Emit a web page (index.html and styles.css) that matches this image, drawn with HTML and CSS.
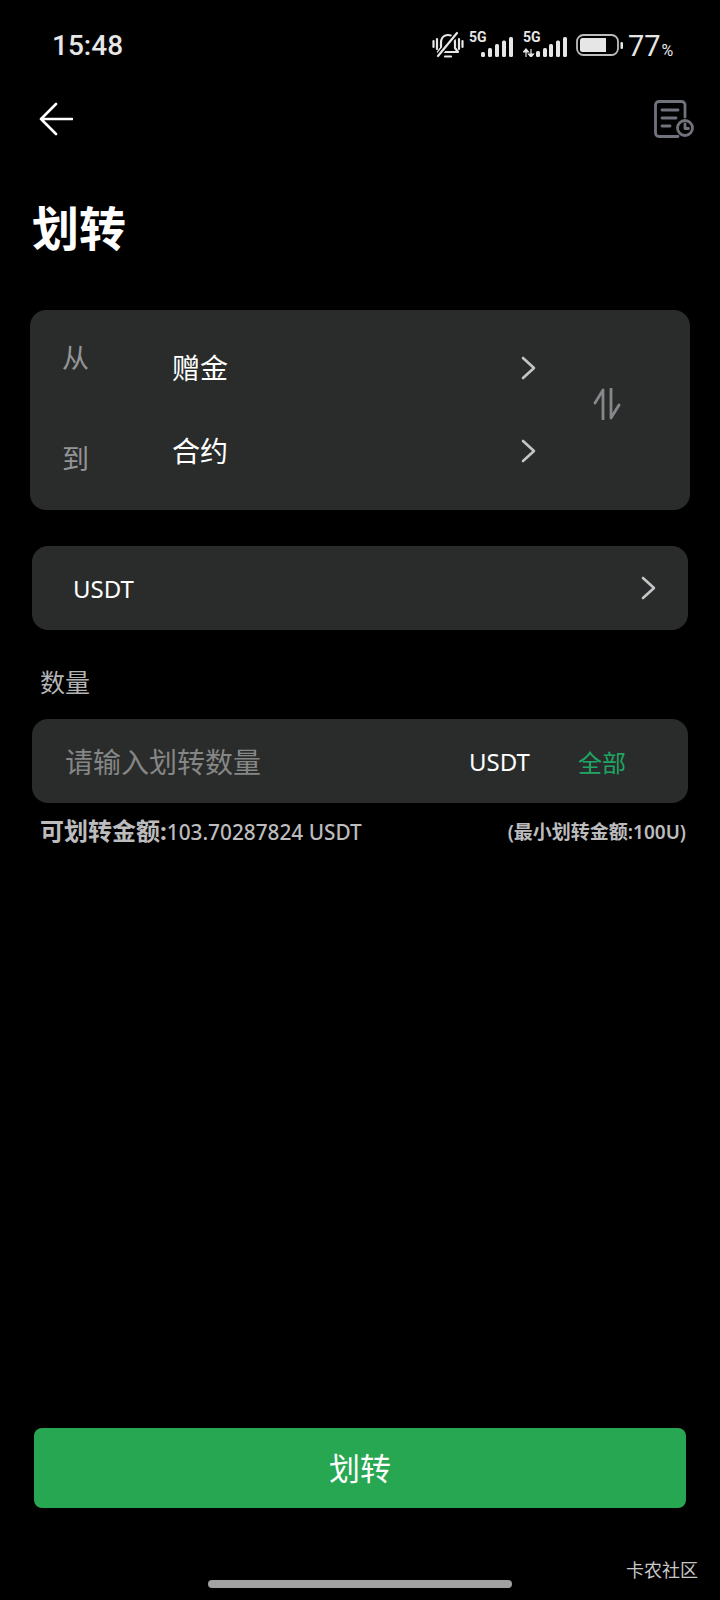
FILE: index.html
```html
<!DOCTYPE html>
<html lang="zh-CN">
  <head>
    <meta charset="UTF-8" />
    <meta name="viewport" content="width=device-width, initial-scale=1.0" />
    <title>划转</title>
    <link rel="stylesheet" href="styles.css">
  </head>
  <body>
    <div class="status">
      <span class="time">15:48</span>
      <div class="status-icons">
        <svg class="bell" width="32" height="28" viewBox="0 0 32 28" fill="none" stroke="#e6e6e6" stroke-width="2.2" stroke-linecap="round" stroke-linejoin="round">
          <path d="M1.5 10v6M5 8v10M30.500 10v6M27 8v10"/>
          <path d="M16 4c-5 0-7 4-7 8v5l-3 4h20l-3-4v-5c0-4-2-8-7-8z"/>
          <path d="M13 25.500h6"/>
          <path d="M6 25L25 2" stroke="#000" stroke-width="5"/>
          <path d="M6 25L25 2"/>
        </svg>
        <div class="net net-first">
          <span class="net-label">5G</span>
          <svg width="32" height="20" viewBox="0 0 32 20" fill="#e6e6e6">
            <rect x="0" y="15" width="4" height="5" rx="1.500"/>
            <rect x="7" y="11" width="4" height="9" rx="1.500"/>
            <rect x="14" y="7" width="4" height="13" rx="1.500"/>
            <rect x="21" y="3.500" width="4" height="16.500" rx="1.500"/>
            <rect x="28" y="0" width="4" height="20" rx="1.500"/>
          </svg>
        </div>
        <div class="net">
          <span class="net-label">5G</span>
          <svg width="44" height="20" viewBox="0 0 44 20" fill="#e6e6e6">
            <path d="M3 12v8M0.500 15L3 12l2.500 3zM8 12v8M5.500 17L8 20l2.500-3z" stroke="#e6e6e6" stroke-width="1.200"/>
            <rect x="13" y="14" width="4" height="6" rx="1.500"/>
            <rect x="20" y="11" width="4" height="9" rx="1.500"/>
            <rect x="26" y="7" width="4" height="13" rx="1.500"/>
            <rect x="33" y="3.500" width="4" height="16.500" rx="1.500"/>
            <rect x="40" y="0" width="4" height="20" rx="1.500"/>
          </svg>
        </div>
        <svg class="battery" width="47" height="22" viewBox="0 0 47 22" fill="none">
          <rect x="1" y="1" width="41" height="20" rx="6.500" stroke="#bdbdbd" stroke-width="1.800"/>
          <path d="M6.500 4H30v14H6.500A2.500 2.500 0 0 1 4 15.500v-9A2.500 2.500 0 0 1 6.500 4z" fill="#e6e6e6"/>
          <rect x="44.500" y="8" width="2.500" height="7" rx="1.200" fill="#e6e6e6"/>
        </svg>
        <span class="percent">77<small>%</small></span>
      </div>
    </div>

    <div class="nav">
      <svg width="34" height="34" viewBox="0 0 34 34" fill="none" stroke="#fff" stroke-width="2.600" stroke-linecap="round" stroke-linejoin="round">
        <path d="M33 17H2M17 2L2 17l15 15"/>
      </svg>
      <svg width="40" height="38" viewBox="0 0 40 38" fill="none" stroke="#70727c" stroke-width="2.800" stroke-linecap="round" stroke-linejoin="round">
        <path d="M31 17V5a3.500 3.500 0 0 0-3.500-3.500H5A3.500 3.500 0 0 0 1.500 5v28A3.500 3.500 0 0 0 5 36.500h19"/>
        <path d="M8 10h16M8 18h14M8 26h8"/>
        <circle cx="31" cy="28" r="7.500"/>
        <path d="M31 24v4.500h3.500"/>
      </svg>
    </div>

    <div class="main">
      <h1>划转</h1>

      <div class="card transfer">
        <div class="labels">
          <span>从</span>
          <span>到</span>
        </div>
        <div class="values">
          <div class="value-row">
            <span>赠金</span>
            <svg class="chevron" width="16" height="24" viewBox="0 0 16 24"><path d="M3 2l11 10L3 22"/></svg>
          </div>
          <div class="value-row">
            <span>合约</span>
            <svg class="chevron" width="16" height="24" viewBox="0 0 16 24"><path d="M3 2l11 10L3 22"/></svg>
          </div>
        </div>
        <svg class="swap" width="28" height="32" viewBox="0 0 28 32" fill="none" stroke="#85878a" stroke-width="2.800" stroke-linecap="round" stroke-linejoin="round">
          <path d="M10 31V2L2 15M18 1v29l8-13"/>
        </svg>
      </div>

      <div class="card row coin">
        <span>USDT</span>
        <svg class="chevron" width="16" height="24" viewBox="0 0 16 24"><path d="M3 2l11 10L3 22"/></svg>
      </div>

      <div class="field-label">数量</div>

      <div class="card row amount">
        <span class="placeholder">请输入划转数量</span>
        <span class="unit">USDT</span>
        <span class="all">全部</span>
      </div>

      <div class="limits">
        <span class="avail"><b>可划转金额:</b>103.70287824 USDT</span>
        <span class="min">(最小划转金额:100U)</span>
      </div>

      <div class="submit">划转</div>
    </div>

    <div class="home-bar"></div>
    <div class="watermark">卡农社区</div>
  </body>
</html>
```

FILE: styles.css
```css
*{
    margin: 0;
    padding: 0;
    box-sizing: border-box;
}
body{
    position: relative;
    display: flex;
    flex-direction: column;
    height: 1600px;
    background: #000;
    color: #fff;
    font-family: "Noto Sans", "Noto Sans CJK SC", sans-serif;
    overflow: hidden;
}
.status{
    display: flex;
    justify-content: space-between;
    align-items: center;
    height: 90px;
    padding: 0 48px 0 52px;
    color: #e6e6e6;
    font-family: Roboto, sans-serif;
}
.time{
    font-size: 28px;
    font-weight: 500;
}
.status-icons{
    display: flex;
    align-items: center;
}
.bell{
    margin-right: 5px;
}
.net{
    position: relative;
    display: flex;
    align-items: flex-end;
    justify-content: flex-end;
    height: 24px;
    width: 44px;
    margin-left: 10px;
}
.net-first{
    margin-left: 0;
}
.net-label{
    position: absolute;
    left: 0;
    top: -3px;
    font-size: 14px;
    line-height: 14px;
    font-weight: 700;
}
.battery{
    margin-left: 9px;
}
.percent{
    width: 49px;
    padding: 6px 0 0 5px;
    font-size: 29px;
    line-height: 34px;
    white-space: nowrap;
}
.percent small{
    font-size: 16px;
    margin-left: 1px;
}
.nav{
    display: flex;
    justify-content: space-between;
    align-items: center;
    height: 58px;
    padding: 0 26px 0 39px;
}
.main{
    flex: 1;
    display: flex;
    flex-direction: column;
    padding: 0 30px;
}
h1{
    height: 60px;
    margin: 50px 0 52px 2px;
    font-size: 47px;
    line-height: 60px;
    font-weight: 700;
}
.card{
    background: #2a2c2b;
    border-radius: 16px;
}
.transfer{
    display: flex;
    align-items: flex-start;
    height: 200px;
    padding-left: 32px;
}
.labels{
    display: flex;
    flex-direction: column;
    gap: 71px;
    width: 110px;
    padding-top: 33px;
    font-size: 27px;
    line-height: 30px;
    color: #949596;
}
.values{
    display: flex;
    flex-direction: column;
    gap: 51px;
    width: 364px;
    padding-top: 42px;
    font-size: 28px;
    line-height: 32px;
}
.value-row{
    display: flex;
    justify-content: space-between;
    align-items: center;
}
.chevron{
    fill: none;
    stroke: #c4c5c9;
    stroke-width: 2.600;
    stroke-linecap: round;
    stroke-linejoin: round;
}
.swap{
    margin: 78px 0 0 57px;
}
.row{
    display: flex;
    align-items: center;
    height: 84px;
    margin: 0 2px;
}
.coin{
    justify-content: space-between;
    margin-top: 36px;
    padding: 0 32px 0 41px;
    font-size: 24px;
}
.field-label{
    margin: 35px 0 20px 10px;
    font-size: 25px;
    line-height: 34px;
    color: #b4b4b4;
}
.amount{
    padding-left: 33px;
}
.placeholder{
    width: 404px;
    font-size: 28px;
    color: #858686;
}
.unit{
    width: 109px;
    font-size: 24px;
}
.all{
    font-size: 24px;
    color: #21a565;
}
.limits{
    display: flex;
    justify-content: space-between;
    align-items: center;
    margin: 12px 4px 0 10px;
    line-height: 32px;
    color: #bcbcbe;
}
.avail{
    font-size: 20.800px;
    font-weight: 500;
}
.avail b{
    font-size: 24px;
}
.min{
    font-size: 19px;
    font-weight: 600;
}
.submit{
    display: flex;
    justify-content: center;
    align-items: center;
    height: 80px;
    margin: auto 4px 0;
    padding-bottom: 3px;
    background: #27a751;
    border-radius: 8px;
    font-size: 31px;
}
.home-bar{
    width: 304px;
    height: 8px;
    margin: 72px auto 12px;
    background: #a2a2a2;
    border-radius: 4px;
}
.watermark{
    position: absolute;
    right: 22px;
    bottom: 18px;
    font-size: 18px;
    line-height: 24px;
    color: #c8c8c8;
}
```
